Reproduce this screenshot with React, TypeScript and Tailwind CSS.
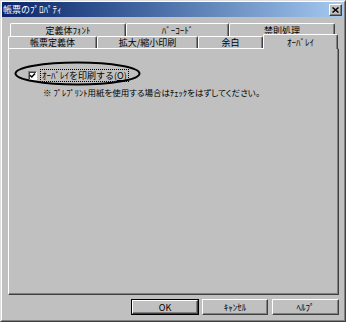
import React from "react";

const font = "font-['Noto_Sans_CJK_JP','MS_UI_Gothic',sans-serif]";

function Tab({ w, children }: { w: string; children: React.ReactNode }) {
  return (
    <div className={`${w} h-full flex items-center justify-center border-t border-l border-r border-t-white border-l-white border-r-[#404040] shadow-[inset_-1px_0_0_#808080] rounded-t-[2px]`}>
      <span className="leading-none text-black">{children}</span>
    </div>
  );
}

function Button({ w, children, def }: { w: string; children: React.ReactNode; def?: boolean }) {
  return (
    <div className={`${w} h-[16px] ${def ? "border border-black" : ""}`}>
      <div className="w-full h-full flex items-center justify-center border border-t-white border-l-white border-r-[#404040] border-b-[#404040] shadow-[inset_-1px_-1px_0_#808080]">
        <span className="leading-none text-black">{children}</span>
      </div>
    </div>
  );
}

export default function App() {
  return (
    <div className={`w-[346px] h-[322px] bg-[#c0c0c0] relative overflow-hidden text-[9px] ${font}`}>
      <div className="w-full h-full border border-t-[#dfdfdf] border-l-[#dfdfdf] border-r-[#404040] border-b-[#404040]">
        <div className="w-full h-full border border-t-white border-l-white border-r-[#808080] border-b-[#808080] flex flex-col">
          {/* Title bar */}
          <div className="h-[15px] bg-linear-to-r from-[#0a246a] to-[#a6caf0] flex items-center justify-between pl-[1px] pr-[2px]">
            <span className="text-white leading-none">帳票のﾌﾟﾛﾊﾟﾃｨ</span>
            <div className="w-[13px] h-[12px] bg-[#c0c0c0] border border-t-white border-l-white border-r-[#404040] border-b-[#404040] shadow-[inset_-1px_-1px_0_#808080] flex items-center justify-center">
              <svg width="7" height="6" viewBox="0 0 7 6">
                <path d="M0.5 0.5 L6.5 5.5 M6.5 0.5 L0.5 5.5" stroke="black" strokeWidth="1.5" />
              </svg>
            </div>
          </div>

          {/* Body */}
          <div className="pl-[6px] pt-[6px] flex flex-col">
            <div className="w-[331px] flex flex-col">
              {/* Back row */}
              <div className="h-[13px] flex pl-[2px]">
                <Tab w="w-[116px]">定義体ﾌｫﾝﾄ</Tab>
                <Tab w="w-[103px]">ﾊﾞｰｺｰﾄﾞ</Tab>
                <Tab w="w-[106px]">禁則処理</Tab>
              </div>
              {/* Front row */}
              <div className="h-[12px] flex">
                <Tab w="w-[89px]">帳票定義体</Tab>
                <Tab w="w-[101px]">拡大/縮小印刷</Tab>
                <Tab w="w-[65px]">余白</Tab>
                <div className="w-[75px] h-[15px] -mt-[2px] relative z-10 bg-[#c0c0c0] flex items-start justify-center pt-[3px] border-t border-l border-r border-t-white border-l-white border-r-[#404040] shadow-[inset_-1px_0_0_#808080] rounded-t-[2px]">
                  <span className="leading-none">ｵｰﾊﾞﾚｲ</span>
                </div>
              </div>
              {/* Panel */}
              <div className="h-[247px] border border-t-white border-l-white border-r-[#404040] border-b-[#404040] shadow-[inset_-1px_-1px_0_#808080] flex flex-col pt-[20px]">
                <div className="flex items-center pl-[19px] h-[13px]">
                  <div className="w-[9px] h-[9px] bg-white border border-t-[#808080] border-l-[#808080] border-r-white border-b-white shadow-[inset_1px_1px_0_#404040] flex items-center justify-center">
                    <svg width="7" height="7" viewBox="0 0 7 7">
                      <path d="M1 3.2 L2.8 5 L6 1.6" stroke="black" strokeWidth="1.5" fill="none" />
                    </svg>
                  </div>
                  <div className="ml-[3px] h-[13px] px-[1px] flex items-center border border-dotted border-black">
                    <span className="leading-none">
                      ｵｰﾊﾞﾚｲを印刷する(<span className="underline">O</span>)
                    </span>
                  </div>
                </div>
                <div className="pl-[34px] mt-[5px] h-[11px] flex items-center">
                  <span className="leading-none text-[8.5px] [font-feature-settings:'palt']">※ ﾌﾟﾚﾌﾟﾘﾝﾄ用紙を使用する場合はﾁｪｯｸをはずしてください。</span>
                </div>
              </div>
            </div>
            {/* Buttons */}
            <div className="w-[331px] mt-[4px] flex justify-end">
              <Button w="w-[68px]" def>OK</Button>
              <div className="w-[3px]" />
              <Button w="w-[66px]">ｷｬﾝｾﾙ</Button>
              <div className="w-[4px]" />
              <Button w="w-[67px]">ﾍﾙﾌﾟ</Button>
            </div>
          </div>
        </div>
      </div>
      {/* Annotation ellipse */}
      <svg className="absolute left-[14px] top-[61px] pointer-events-none" width="127" height="25" viewBox="0 0 127 25">
        <ellipse cx="63.5" cy="12.5" rx="62" ry="11" fill="none" stroke="black" strokeWidth="2" />
      </svg>
    </div>
  );
}
